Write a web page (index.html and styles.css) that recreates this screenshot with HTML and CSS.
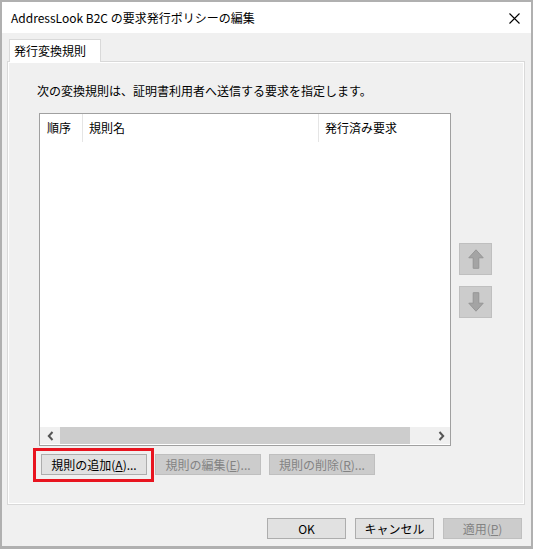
FILE: index.html
```html
<!DOCTYPE html>
<html lang="ja">
<head>
<meta charset="utf-8">
<title>AddressLook B2C の要求発行ポリシーの編集</title>
<link rel="stylesheet" href="styles.css">
</head>
<body>
<div class="window">
  <div class="titlebar">
    <span class="title">AddressLook B2C の要求発行ポリシーの編集</span>
    <svg class="close" width="11" height="11" viewBox="0 0 11 11"><path d="M0.5 0.5 L10.5 10.5 M10.5 0.5 L0.5 10.5" stroke="#000" stroke-width="1.1" fill="none"/></svg>
  </div>
  <div class="tabstrip">
    <div class="tab">発行変換規則</div>
  </div>
  <div class="panel">
    <p class="desc">次の変換規則は、証明書利用者へ送信する要求を指定します。</p>
    <div class="listrow">
      <div class="list">
        <div class="header">
          <div class="col col-order">順序</div>
          <div class="col col-name">規則名</div>
          <div class="col col-claims">発行済み要求</div>
        </div>
        <div class="listbody"></div>
        <div class="hscroll">
          <div class="sbtn"><svg width="7" height="10" viewBox="0 0 7 10"><path d="M5.5 1 L1.8 5 L5.5 9" stroke="#555" stroke-width="2" fill="none"/></svg></div>
          <div class="thumb"></div>
          <div class="sbtn right"><svg width="7" height="10" viewBox="0 0 7 10"><path d="M1.5 1 L5.2 5 L1.5 9" stroke="#555" stroke-width="2" fill="none"/></svg></div>
        </div>
      </div>
      <div class="side">
        <div class="arrowbtn"><svg width="16" height="20" viewBox="0 0 16 20"><path d="M8 0.8 L15.2 8.8 L10.8 8.8 L10.8 19.3 L5.2 19.3 L5.2 8.8 L0.8 8.8 Z" fill="#a4a4a4" stroke="#969696" stroke-width="1"/></svg></div>
        <div class="arrowbtn"><svg width="16" height="20" viewBox="0 0 16 20"><path d="M8 19.2 L15.2 11.2 L10.8 11.2 L10.8 0.7 L5.2 0.7 L5.2 11.2 L0.8 11.2 Z" fill="#a4a4a4" stroke="#969696" stroke-width="1"/></svg></div>
      </div>
    </div>
    <div class="btnrow">
      <div class="add-wrap">
        <button class="btn">規則の追加(<u>A</u>)...</button>
        <div class="highlight"></div>
      </div>
      <button class="btn disabled">規則の編集(<u>E</u>)...</button>
      <button class="btn disabled">規則の削除(<u>R</u>)...</button>
    </div>
  </div>
  <div class="footer">
    <button class="btn dlg">OK</button>
    <button class="btn dlg">キャンセル</button>
    <button class="btn dlg disabled">適用(<u>P</u>)</button>
  </div>
</div>
</body>
</html>
```

FILE: styles.css
```css
* { box-sizing: border-box; }

body {
  margin: 0;
  font-family: "Noto Sans CJK JP", "Noto Sans", sans-serif;
  font-size: 12px;
  color: #000;
  background: #fff;
}

.window {
  width: 533px;
  height: 549px;
  border: 2px solid #b0b0b0;
  border-bottom-width: 3px;
  background: #f0f0f0;
  display: flex;
  flex-direction: column;
}

.titlebar {
  height: 31px;
  flex: none;
  background: #fff;
  display: flex;
  align-items: center;
  justify-content: space-between;
  padding: 0 11px 0 9px;
}

.title { line-height: 16px; }

.close { display: block; margin-top: 1px; }

.tabstrip {
  flex: none;
  display: flex;
  padding: 6px 0 0 7px;
}

.tab {
  position: relative;
  z-index: 1;
  width: 92px;
  height: 23px;
  margin-bottom: -1px;
  background: #fff;
  border: 1px solid #d9d9d9;
  border-bottom: none;
  padding-left: 4px;
  line-height: 21px;
}

.panel {
  flex: none;
  margin: 0 6px 0 5px;
  height: 444px;
  border: 1px solid #d9d9d9;
  box-shadow: inset 0 0 0 1px #fff;
  padding: 21px 0 0 29px;
}

.desc {
  margin: 0;
  line-height: 16px;
}

.listrow {
  display: flex;
  margin-top: 14px;
}

.list {
  margin-left: 2px;
  width: 412px;
  height: 333px;
  border: 1px solid #a0a0a0;
  background: #fff;
  display: flex;
  flex-direction: column;
}

.header {
  display: flex;
  height: 28px;
  flex: none;
}

.col {
  line-height: 28px;
  padding-left: 6px;
}

.col-order {
  width: 43px;
  padding-left: 7px;
  border-right: 1px solid #e5e5e5;
}

.col-name {
  width: 236px;
  border-right: 1px solid #e5e5e5;
}

.col-claims { flex: 1; }

.listbody { flex: 1; }

.hscroll {
  flex: none;
  height: 17px;
  margin-bottom: 1px;
  background: #f0f0f0;
  display: flex;
  align-items: stretch;
}

.sbtn {
  width: 20px;
  display: flex;
  align-items: center;
  justify-content: center;
}

.sbtn.right { margin-left: auto; width: 18px; }

.thumb {
  width: 350px;
  background: #cdcdcd;
}

.side {
  margin-left: 8px;
  padding-top: 130px;
  display: flex;
  flex-direction: column;
  gap: 11px;
}

.arrowbtn {
  width: 33px;
  height: 32px;
  background: #cccccc;
  border: 1px solid #bfbfbf;
  display: flex;
  align-items: center;
  justify-content: center;
}

.arrowbtn svg { display: block; }

.btnrow {
  display: flex;
  gap: 8px;
  margin-top: 8px;
  padding-left: 4px;
}

.add-wrap { position: relative; }

.btn {
  font-family: inherit;
  font-size: 12px;
  color: #000;
  width: 106px;
  height: 21px;
  padding: 0;
  margin: 0;
  line-height: 19px;
  background: #e1e1e1;
  border: 1px solid #adadad;
  text-align: center;
  display: block;
}

.btn.disabled {
  background: #cccccc;
  border-color: #bfbfbf;
  color: #838383;
}

.btn u { text-underline-offset: 1px; }

.highlight {
  position: absolute;
  left: -8px;
  top: -6px;
  width: 121px;
  height: 34px;
  border: 3px solid #e8141f;
}

.footer {
  display: flex;
  justify-content: flex-end;
  gap: 9px;
  margin-top: 13px;
  padding-right: 9px;
}

.btn.dlg { width: 79px; }
```
